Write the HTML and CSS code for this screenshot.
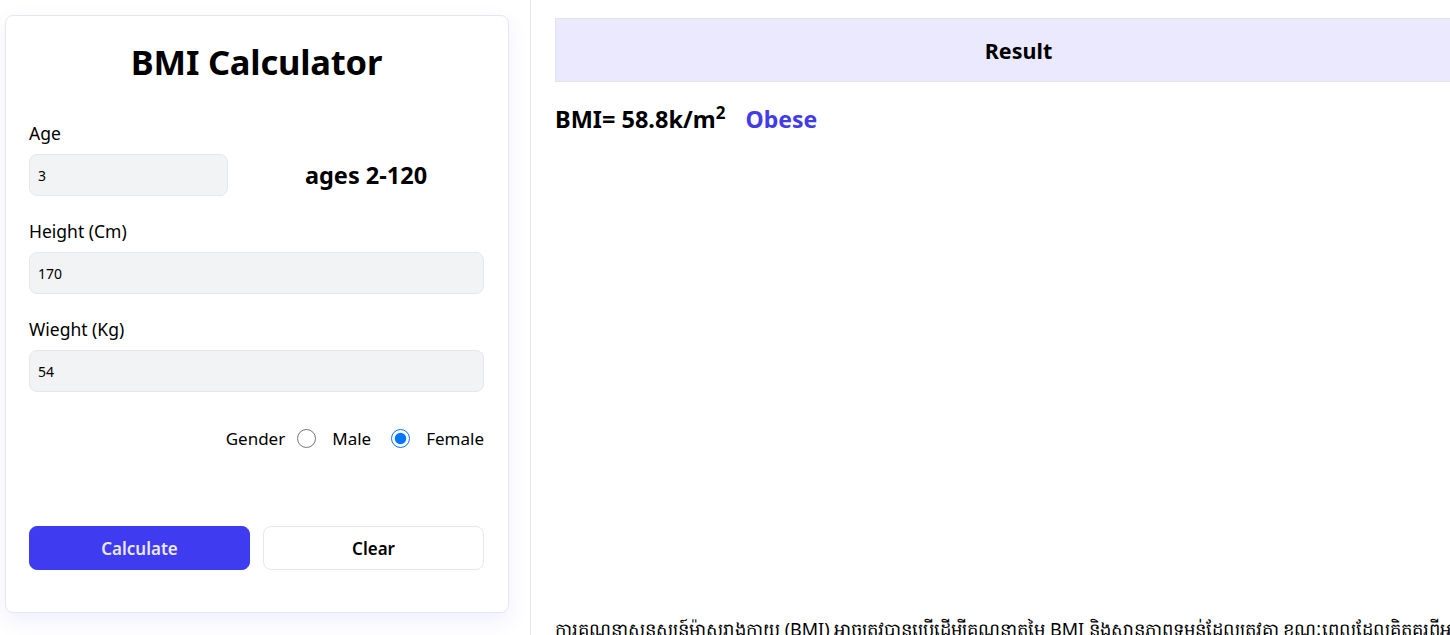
FILE: index.html
```html
<!DOCTYPE html>
<html lang="en">
<head>
<meta charset="utf-8">
<title>BMI Calculator</title>
<link rel="stylesheet" href="styles.css">
</head>
<body>
<div class="page">
  <aside class="left">
    <div class="card">
      <h1 class="title">BMI Calculator</h1>
      <div class="field">
        <label class="label">Age</label>
        <div class="age-row">
          <input class="input input-age" type="text" value="3">
          <span class="age-hint">ages 2-120</span>
        </div>
      </div>
      <div class="field">
        <label class="label">Height (Cm)</label>
        <input class="input" type="text" value="170">
      </div>
      <div class="field">
        <label class="label">Wieght (Kg)</label>
        <input class="input" type="text" value="54">
      </div>
      <div class="gender">
        <span>Gender</span>
        <input class="radio" type="radio" name="g" id="male">
        <label for="male">Male</label>
        <input class="radio" type="radio" name="g" id="female" checked>
        <label for="female">Female</label>
      </div>
      <div class="buttons">
        <button class="btn btn-primary">Calculate</button>
        <button class="btn btn-outline">Clear</button>
      </div>
    </div>
  </aside>
  <main class="right">
    <div class="result-head">Result</div>
    <div class="bmi">BMI= 58.8k/m<sup>2</sup> <span class="status">Obese</span></div>
    <p class="khmer">ការគណនាសន្ទស្សន៍ម៉ាសរាងកាយ (BMI) អាចត្រូវបានប្រើដើម្បីគណនាតម្លៃ BMI និងស្ថានភាពទម្ងន់ដែលត្រូវគ្នា ខណៈពេលដែលគិតគូរពីអាយុ</p>
  </main>
</div>
</body>
</html>
```
FILE: styles.css
```css
* { box-sizing: border-box; }
html, body { margin: 0; padding: 0; }
body {
  font-family: "Noto Sans", "Open Sans", sans-serif;
  color: #000;
  background: #fff;
  overflow: hidden;
  width: 1450px;
  height: 635px;
}
.page {
  display: flex;
  align-items: stretch;
  height: 635px;
}
.left {
  flex: 0 0 531px;
  border-right: 1px solid #e5e7eb;
  padding: 15px 21px 0 5px;
}
.card {
  border: 1px solid #e5e7eb;
  border-radius: 8px;
  box-shadow: 0 8px 20px rgba(99, 102, 241, 0.10);
  padding: 22px 24px 42px 23px;
  height: 598px;
  display: flex;
  flex-direction: column;
}
.title {
  margin: 0;
  text-align: center;
  font-size: 34.5px;
  font-weight: 700;
  line-height: 48px;
  letter-spacing: -0.2px;
}
.field {
  margin-top: 35px;
  display: flex;
  flex-direction: column;
}
.field + .field { margin-top: 23px; }
.label {
  font-size: 17.5px;
  line-height: 24px;
  margin-bottom: 9px;
}
.age-row {
  display: flex;
  align-items: center;
}
.input {
  height: 42px;
  width: 100%;
  border: 1px solid #e5e7eb;
  border-radius: 8px;
  background: #f2f3f5;
  padding: 0 8px;
  font-family: "Noto Sans", sans-serif;
  font-size: 14px;
  color: #000;
  outline: none;
}
.input-age { width: 199px; flex: 0 0 199px; }
.age-hint {
  flex: 1;
  text-align: center;
  padding-left: 20px;
  font-size: 23.5px;
  font-weight: 700;
}
.gender {
  margin-top: 35px;
  display: flex;
  align-items: center;
  justify-content: flex-end;
  font-size: 17px;
}
.radio {
  width: 19px;
  height: 19px;
  margin: 0 16px 0 12px;
  accent-color: #0075ff;
}
.gender label + .radio { margin-left: 20px; }
.buttons {
  margin-top: auto;
  display: flex;
  gap: 13px;
}
.btn {
  flex: 1;
  height: 44px;
  border-radius: 8px;
  font-family: "Noto Sans", sans-serif;
  font-size: 17px;
  font-weight: 600;
}
.btn-primary {
  background: #3f3bf0;
  color: #e9e8ff;
  border: 1px solid #3f3bf0;
}
.btn-outline {
  background: #fff;
  color: #000;
  border: 1px solid #e5e7eb;
}
.right {
  flex: 0 0 960px;
  padding: 18px 24px 0 24px;
  display: flex;
  flex-direction: column;
}
.result-head {
  width: 926px;
  height: 64px;
  background: #eae9fd;
  border-top: 1px solid #e3e3e8;
  border-bottom: 1px solid #e3e3e8;
  border-left: 1px solid #e3e3e8;
  display: flex;
  align-items: center;
  justify-content: center;
  font-size: 21.5px;
  font-weight: 700;
}
.bmi {
  margin-top: 21px;
  font-size: 23.5px;
  font-weight: 700;
  line-height: 32px;
}
.bmi sup { font-size: 17px; line-height: 0; }
.status { color: #413ce8; margin-left: 14px; font-size: 23px; }
.khmer {
  margin: auto 0 0 0;
  font-size: 18px;
  line-height: 24px;
  white-space: nowrap;
  transform: translateY(6px);
}
```
